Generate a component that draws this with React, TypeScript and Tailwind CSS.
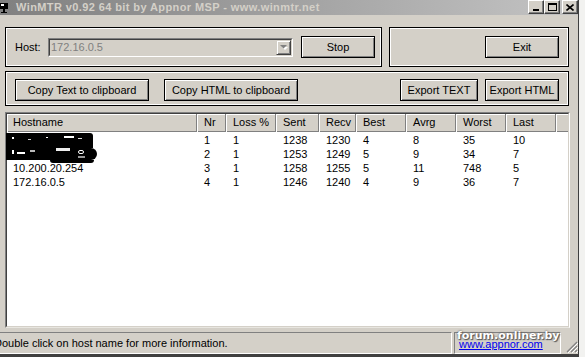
import React from 'react';

type Row = {
  host: string;
  vals: (string | number)[];
};

const rows: Row[] = [
  { host: '', vals: [1, 1, 1238, 1230, 4, 8, 35, 10] },
  { host: '', vals: [2, 1, 1253, 1249, 5, 9, 34, 7] },
  { host: '10.200.20.254', vals: [3, 1, 1258, 1255, 5, 11, 748, 5] },
  { host: '172.16.0.5', vals: [4, 1, 1246, 1240, 4, 9, 36, 7] },
];

// column widths taken from the header separators
const cols = [
  { label: 'Hostname', w: 'w-[190px]', pl: 'pl-[6px]' },
  { label: 'Nr', w: 'w-[29px]', pl: 'pl-[7px]' },
  { label: 'Loss %', w: 'w-[50px]', pl: 'pl-[7px]' },
  { label: 'Sent', w: 'w-[43px]', pl: 'pl-[7px]' },
  { label: 'Recv', w: 'w-[37px]', pl: 'pl-[7px]' },
  { label: 'Best', w: 'w-[50px]', pl: 'pl-[7px]' },
  { label: 'Avrg', w: 'w-[50px]', pl: 'pl-[7px]' },
  { label: 'Worst', w: 'w-[50px]', pl: 'pl-[7px]' },
  { label: 'Last', w: 'w-[50px]', pl: 'pl-[7px]' },
];

const Btn = ({ w, children }: { w: string; children: React.ReactNode }) => (
  <div
    className={`flex h-[22px] shrink-0 items-center justify-center border border-black bg-[#d4d0c8] shadow-[inset_1px_1px_0_#fff,inset_-1px_-1px_0_#808080] ${w}`}
  >
    {children}
  </div>
);

const CapButton = ({ children }: { children: React.ReactNode }) => (
  <div className="flex h-[14px] w-[16px] items-center justify-center border border-t-white border-l-white border-r-[#404040] border-b-[#404040] bg-[#d4d0c8] shadow-[inset_-1px_-1px_0_#808080]">
    {children}
  </div>
);

const TitleBar = () => (
  <div className="flex h-[15px] items-start bg-linear-to-r from-[#808080] to-[#c4c4c4]">
    <svg width="10" height="12" viewBox="0 0 10 12" className="mt-[2px] shrink-0">
      <rect x="0" y="1" width="8" height="6" fill="#000" />
      <rect x="1" y="2" width="3" height="2" fill="#fff" />
      <rect x="3" y="7" width="2" height="4" fill="#000" />
      <rect x="1" y="10" width="6" height="1" fill="#000" />
    </svg>
    <span className="ml-[6px] mt-[1px] text-[11px] leading-[13px] font-bold tracking-[0.4px] text-[#d4d0c8] font-['Liberation_Sans',Arial,sans-serif]">
      WinMTR v0.92 64 bit by Appnor MSP - www.winmtr.net
    </span>
    <div className="ml-auto flex">
      <CapButton>
        <div className="mt-[6px] h-[2px] w-[6px] bg-black" />
      </CapButton>
      <CapButton>
        <div className="h-[8px] w-[9px] border border-t-2 border-black" />
      </CapButton>
      <div className="ml-[2px]">
        <CapButton>
          <svg width="8" height="7" viewBox="0 0 8 7">
            <path d="M0.5 0.5 L7.5 6.5 M7.5 0.5 L0.5 6.5" stroke="#000" strokeWidth="1.6" />
          </svg>
        </CapButton>
      </div>
    </div>
  </div>
);

const Combo = () => (
  <div className="h-[19px] w-[245px] shrink-0 border border-t-[#808080] border-l-[#808080] border-r-white border-b-white">
    <div className="flex h-full items-stretch border border-t-[#404040] border-l-[#404040] border-r-[#d4d0c8] border-b-[#d4d0c8] bg-[#d4d0c8]">
      <span className="flex-1 pl-[1px] text-[11px] leading-[15px] text-[#808080]">172.16.0.5</span>
      <div className="flex w-[15px] items-center justify-center border border-t-[#d4d0c8] border-l-[#d4d0c8] border-r-[#404040] border-b-[#404040] shadow-[inset_1px_1px_0_#fff,inset_-1px_-1px_0_#808080]">
        <svg width="8" height="5" viewBox="0 0 8 5">
          <path d="M1 1 L7 1 L4 4 Z" fill="#fff" transform="translate(1 1)" />
          <path d="M0 0 L7 0 L3.5 3.5 Z" fill="#808080" />
        </svg>
      </div>
    </div>
  </div>
);

const Redaction = () => (
  <div className="pointer-events-none absolute left-0 top-[20px]">
    <div className="h-[15px] w-[87px] rounded-tr-[3px] bg-black" />
    <div className="h-[12px] w-[91px] rounded-r-[6px] bg-black" />
    <div className="ml-[44px] h-[3px] w-[44px] rounded-b-[3px] bg-black" />
    <span className="absolute left-[6px] top-[4px] h-[2px] w-[2px] bg-white" />
    <span className="absolute left-[22px] top-[6px] h-[1px] w-[3px] bg-[#ccc]" />
    <span className="absolute left-[40px] top-[4px] h-[1px] w-[2px] bg-white" />
    <span className="absolute left-[58px] top-[3px] h-[2px] w-[10px] bg-white" />
    <span className="absolute left-[72px] top-[5px] h-[1px] w-[4px] bg-[#ddd]" />
    <span className="absolute left-[6px] top-[17px] h-[4px] w-[2px] bg-white" />
    <span className="absolute left-[11px] top-[19px] h-[2px] w-[8px] bg-white" />
    <span className="absolute left-[24px] top-[17px] h-[2px] w-[5px] bg-[#bbb]" />
    <span className="absolute left-[50px] top-[15px] h-[3px] w-[14px] bg-[#eee]" />
    <span className="absolute left-[72px] top-[17px] h-[4px] w-[6px] rounded-full border border-white" />
    <span className="absolute left-[72px] top-[23px] h-[2px] w-[7px] bg-[#999]" />
  </div>
);

const ListView = () => (
  <div className="relative ml-[5px] h-[216px] w-[565px] border border-t-[#808080] border-l-[#808080] border-r-white border-b-[#e8e6e0]">
    <div className="flex h-full flex-col border border-t-[#404040] border-l-[#404040] border-r-[#d4d0c8] border-b-[#d4d0c8] bg-white">
      <div className="flex h-[18px] shrink-0 bg-[#d4d0c8]">
        {cols.map((c) => (
          <div
            key={c.label}
            className={`${c.w} ${c.pl} shrink-0 border-r border-[#808080] text-[11px] leading-[17px] shadow-[inset_1px_1px_0_#fff,inset_0_-1px_0_#808080]`}
          >
            {c.label}
          </div>
        ))}
        <div className="flex-1 shadow-[inset_1px_1px_0_#fff,inset_0_-1px_0_#808080]" />
      </div>
      <div className="pt-[1px]">
        {rows.map((r, i) => (
          <div key={i} className="flex h-[14px] text-[11px] leading-[14px]">
            <div className={`${cols[0].w} ${cols[0].pl} shrink-0`}>{r.host}</div>
            {r.vals.map((v, j) => (
              <div key={j} className={`${cols[j + 1].w} ${cols[j + 1].pl} shrink-0`}>
                {v}
              </div>
            ))}
          </div>
        ))}
      </div>
    </div>
    <Redaction />
  </div>
);

const StatusBar = () => (
  <div className="relative flex h-[22px] items-stretch">
    <div className="flex w-[452px] items-center overflow-hidden border border-l-0 border-t-[#808080] border-b-white border-r-white text-[11px]">
      <span className="-ml-[6px] whitespace-nowrap">Double click on host name for more information.</span>
    </div>
    <div className="ml-[2px] flex w-[107px] items-center border border-t-[#808080] border-l-[#808080] border-b-white border-r-white pl-[4px] pt-[3px] text-[11px]">
      <span className="text-[#0000ee] underline">www.appnor.com</span>
    </div>
    <div className="flex flex-1 items-end justify-end pb-[1px]">
      <svg width="12" height="12" viewBox="0 0 12 12">
        <path d="M11 1 L1 11 M11 5 L5 11 M11 9 L9 11" stroke="#808080" strokeWidth="1.2" />
        <path d="M12 2 L2 12 M12 6 L6 12 M12 10 L10 12" stroke="#fff" strokeWidth="1" />
      </svg>
    </div>
    <span className="pointer-events-none absolute left-[457px] top-[-3px] text-[11px] leading-[13px] font-bold text-white font-['DejaVu_Sans',Verdana,sans-serif] [text-shadow:0_0_2px_#444,1px_1px_1px_#555]">
      forum.onliner.by
    </span>
  </div>
);

export default function App() {
  return (
    <div className="flex h-[357px] w-[585px] overflow-hidden bg-[#f2f2f0] text-black font-['Liberation_Sans',Arial,sans-serif]">
      <div className="flex w-[579px] shrink-0 flex-col border-r border-[#404040] bg-[#d4d0c8]">
        <TitleBar />

        <div className="mt-[12px] flex h-[40px] items-stretch pl-[5px]">
          <div className="flex w-[377px] items-center border border-black pl-[9px] shadow-[inset_0_0_0_1px_#fff]">
            <span className="w-[33px] text-[11px]">Host:</span>
            <Combo />
            <div className="ml-[8px]">
              <Btn w="w-[74px]">
                <span className="text-[11px]">Stop</span>
              </Btn>
            </div>
          </div>
          <div className="ml-[7px] flex w-[180px] items-center justify-end border border-black pr-[9px] shadow-[inset_0_0_0_1px_#fff]">
            <Btn w="w-[74px]">
              <span className="text-[11px]">Exit</span>
            </Btn>
          </div>
        </div>

        <div className="ml-[5px] mt-[4px] flex h-[35px] w-[564px] items-start border border-black pl-[9px] pr-[9px] pt-[7px] shadow-[inset_0_0_0_1px_#fff] text-[11px]">
          <Btn w="w-[134px]">Copy Text to clipboard</Btn>
          <div className="ml-[15px]">
            <Btn w="w-[134px]">Copy HTML to clipboard</Btn>
          </div>
          <div className="ml-auto flex gap-[7px]">
            <Btn w="w-[78px]">Export TEXT</Btn>
            <Btn w="w-[74px]">Export HTML</Btn>
          </div>
        </div>

        <div className="mt-[6px]">
          <ListView />
        </div>

        <div className="mt-[4px]">
          <StatusBar />
        </div>
        <div className="h-[3px] bg-[#404040]" />
      </div>
      <div className="flex-1" />
    </div>
  );
}
